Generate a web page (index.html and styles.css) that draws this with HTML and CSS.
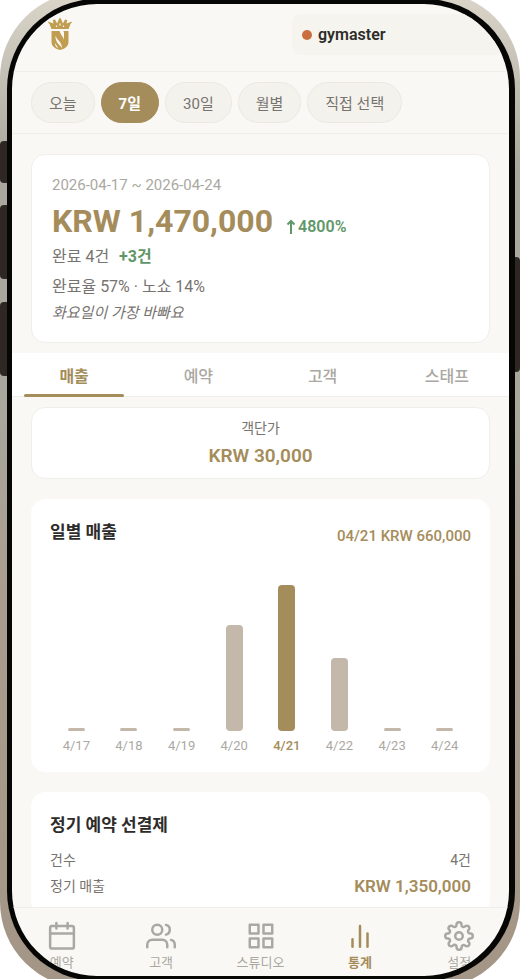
FILE: index.html
```html
<!DOCTYPE html>
<html lang="ko">
<head>
    <meta charset="UTF-8">
    <meta name="viewport" content="width=device-width, initial-scale=1.0">
    <title>통계</title>
    <link rel="stylesheet" href="styles.css">
</head>
<body>
<div class="phone">
    <!-- Side keys -->
    <span class="key key-mute"></span>
    <span class="key key-up"></span>
    <span class="key key-down"></span>
    <span class="key key-power"></span>

    <div class="bezel">
    <div class="screen">
        <header class="topbar">
            <svg class="logo" viewBox="0 0 26 34" aria-label="logo">
                <path fill="#c09d50" d="M4.500 12 2.500 7 .5 4.500l2.500.8 3.500 1.200L5.800 3 8 2.500l2 4L12 2l1-1.500L14 2l2 4.500 2-4 2.200.5-.7 3.500L23 5.300l2.500-.8-2 2.500-2 5z"/>
                <path fill="none" d="M9.500 8.500v1.500M16.500 8.500v1.500M13 6.500v2" stroke="#faf8f4" stroke-width="1.200"/>
                <path fill="#c09d50" d="M4.500 14h17v11c0 4.500-4 7-8.500 8-4.500-1-8.500-3.500-8.500-8z"/>
                <path fill="#faf8f4" d="M12.500 13.500c3.500 0 4.500.5 4.500 2.500v7c-.5-3.500-3.500-4.500-4.500-9.500z"/>
                <path fill="#faf8f4" d="M8.500 18.500c1 4.500 6.500 6 6.500 13-1.500-4-7-5-6.500-13z"/>
                <path fill="#faf8f4" d="M8 26c.8 2 2.500 3 3 5.500C9 30 8 28.500 8 26z"/>
            </svg>
            <button class="store"><span class="dot"></span>gymaster</button>
        </header>

        <div class="chips">
            <button class="chip">오늘</button>
            <button class="chip active">7일</button>
            <button class="chip">30일</button>
            <button class="chip">월별</button>
            <button class="chip">직접 선택</button>
        </div>

        <main class="content">
            <section class="card summary">
                <p class="period">2026-04-17 ~ 2026-04-24</p>
                <div class="total">
                    <strong>KRW 1,470,000</strong>
                    <span class="up">
                        <svg viewBox="0 0 10 16"><path d="M5 15V2M1.500 5.500 5 2l3.500 3.500"/></svg>4800%
                    </span>
                </div>
                <p class="done">완료 4건 <b>+3건</b></p>
                <p class="rate">완료율 57% · 노쇼 14%</p>
                <p class="note">화요일이 가장 바빠요</p>
            </section>

            <div class="tabs" role="tablist">
                <button class="tab active" role="tab" aria-selected="true">매출</button>
                <button class="tab" role="tab">예약</button>
                <button class="tab" role="tab">고객</button>
                <button class="tab" role="tab">스태프</button>
            </div>

            <section class="card average">
                <p>객단가</p>
                <strong>KRW 30,000</strong>
            </section>

            <section class="card plain daily">
                <div class="daily-head">
                    <h2>일별 매출</h2>
                    <span class="peak">04/21 KRW 660,000</span>
                </div>
                <div class="chart">
                    <div class="col"><i style="height:3px"></i><span>4/17</span></div>
                    <div class="col"><i style="height:3px"></i><span>4/18</span></div>
                    <div class="col"><i style="height:3px"></i><span>4/19</span></div>
                    <div class="col"><i style="height:106px"></i><span>4/20</span></div>
                    <div class="col top"><i style="height:146px"></i><span>4/21</span></div>
                    <div class="col"><i style="height:73px"></i><span>4/22</span></div>
                    <div class="col"><i style="height:3px"></i><span>4/23</span></div>
                    <div class="col"><i style="height:3px"></i><span>4/24</span></div>
                </div>
            </section>

            <section class="card plain prepaid">
                <h2>정기 예약 선결제</h2>
                <dl>
                    <div><dt>건수</dt><dd>4건</dd></div>
                    <div><dt>정기 매출</dt><dd class="money">KRW 1,350,000</dd></div>
                </dl>
            </section>
        </main>

        <nav class="tabbar">
            <a href="#">
                <svg viewBox="0 0 24 24"><rect x="2.500" y="4" width="19" height="18" rx="1.500"/><path d="M2.500 10h19M7.500 1.500V6M16.500 1.500V6"/></svg>
                예약
            </a>
            <a href="#">
                <svg viewBox="0 0 24 24"><circle cx="9" cy="7" r="4"/><path d="M1 21v-2a4 4 0 0 1 4-4h8a4 4 0 0 1 4 4v2M23 21v-2a4 4 0 0 0-3-3.870M16 3.130a4 4 0 0 1 0 7.750"/></svg>
                고객
            </a>
            <a href="#">
                <svg viewBox="0 0 24 24"><rect x="3" y="3" width="7" height="7"/><rect x="14" y="3" width="7" height="7"/><rect x="3" y="14" width="7" height="7"/><rect x="14" y="14" width="7" height="7"/></svg>
                스튜디오
            </a>
            <a href="#" class="active">
                <svg viewBox="0 0 24 24"><path d="M6 20.500v-6M12 20.500V4M18 20.500V10"/></svg>
                통계
            </a>
            <a href="#">
                <svg viewBox="0 0 24 24"><circle cx="12" cy="12" r="3"/><path d="M19.400 15a1.650 1.650 0 0 0 .33 1.820l.06.06a2 2 0 1 1-2.830 2.830l-.06-.06a1.650 1.650 0 0 0-2.820 1.170V21a2 2 0 0 1-4 0v-.09a1.650 1.650 0 0 0-2.900-1.260l-.06.06a2 2 0 1 1-2.830-2.830l.06-.06A1.650 1.650 0 0 0 3.090 14H3a2 2 0 0 1 0-4h.09a1.650 1.650 0 0 0 1.260-2.820l-.06-.06a2 2 0 1 1 2.830-2.830l.06.06A1.650 1.650 0 0 0 10 3.090V3a2 2 0 0 1 4 0v.09a1.650 1.650 0 0 0 2.820 1.260l.06-.06a2 2 0 1 1 2.830 2.830l-.06.06A1.650 1.650 0 0 0 20.910 10H21a2 2 0 0 1 0 4h-.09a1.650 1.650 0 0 0-1.510 1z"/></svg>
                설정
            </a>
        </nav>
    </div>
    </div>
</div>
</body>
</html>
```
FILE: styles.css
```css
:root {
    --gold: #a58c5b;
    --bg: #f9f8f4;
    --line: #efeeea;
    --text: #2e2c2a;
    --muted: #77736f;
    --soft: #aaa8a2;
    --green: #5f9768;
}
*,*::before,*::after{box-sizing:border-box;margin:0;padding:0;}
body{
    font-family:Roboto,'Noto Sans CJK KR',sans-serif;
    background:#fff;
    color:var(--text);
    height:100vh;
    overflow:hidden;
}
button{border:none;background:none;font:inherit;color:inherit;cursor:pointer;}

/* ------ Phone shell, runs a little past the window top and bottom ------ */
.phone{
    position:relative;
    height:calc(100vh + 17px);
    margin:-8px 0;
    padding:7px 5px 7px 7px;
    border-radius:86px;
    background:linear-gradient(180deg,#dcd6ca 0,#aaa89e 170px,#aaa89e 400px,#a99c8e 620px,#a49686 100%);
}
.bezel{
    height:100%;
    padding:5px 6px 5px 5px;
    border-radius:90px;
    background:#060604;
}
.screen{
    height:100%;
    display:flex;
    flex-direction:column;
    overflow:hidden;
    border-radius:85px;
    background:var(--bg);
}
.key{position:absolute;left:0;width:7px;background:#2e2723;border-radius:4px 0 0 4px;}
.key-mute{top:149px;height:42px;}
.key-up{top:213px;height:74px;}
.key-down{top:310px;height:74px;}
.key-power{top:265px;height:115px;left:auto;right:0;width:5px;border-radius:0 4px 4px 0;}

/* ------ Header ------ */
.topbar{
    display:flex;
    justify-content:space-between;
    flex-shrink:0;
    height:68px;
    padding:10px 0 0 35px;
    border-bottom:1px solid var(--line);
}
.logo{width:26px;height:34px;margin-top:3px;}
.store{
    display:flex;
    align-items:center;
    gap:6px;
    width:217px;
    height:41px;
    padding:0 10px;
    border-radius:8px 0 0 8px;
    background:#f6f4ee;
    font-size:16px;
    font-weight:600;
}
.dot{width:10px;height:10px;border-radius:50%;background:#c96f3f;}

.chips{
    display:flex;
    flex-shrink:0;
    gap:6px;
    padding:10px 19px;
    border-bottom:1px solid var(--line);
}
.chip{
    height:41px;
    padding:0 17px;
    border:1px solid #ebe8e2;
    border-radius:21px;
    background:#f4f2ed;
    color:var(--muted);
    font-size:15px;
}
.chip.active{background:var(--gold);border-color:var(--gold);color:#fff;font-weight:700;}

/* ------ Content ------ */
.content{flex:1;min-height:0;overflow:hidden;padding-top:20px;}
.card{
    margin:0 19px;
    padding:20px;
    border:1px solid var(--line);
    border-radius:14px;
    background:#fff;
}
.card.plain{border-color:#fff;padding:18px 18px 15px;margin-top:20px;}
h2{font-size:17px;line-height:28px;font-weight:700;}

.summary{padding-bottom:18px;}
.period{font-size:15px;line-height:20px;color:var(--soft);}
.total{display:flex;align-items:baseline;gap:13px;height:40px;margin-top:6px;line-height:40px;}
.total strong{font-size:32px;font-weight:700;color:var(--gold);}
.up{font-size:16px;font-weight:600;color:var(--green);}
.up svg{width:10px;height:16px;margin-right:2px;vertical-align:-3px;fill:none;stroke:currentColor;stroke-width:2;}
.done{font-size:16px;line-height:24px;margin-top:4px;color:var(--muted);}
.done b{margin-left:6px;color:var(--green);}
.rate{font-size:16px;line-height:24px;margin-top:6px;color:var(--muted);}
.note{font-size:15px;line-height:22px;margin-top:3px;color:var(--muted);font-style:italic;}

.tabs{display:flex;margin-top:10px;background:#fff;border-bottom:1px solid var(--line);}
.tab{position:relative;flex:1;height:43px;font-size:16px;font-weight:500;color:var(--soft);}
.tab.active{color:var(--gold);font-weight:700;}
.tab.active::after{
    content:'';
    position:absolute;
    left:12px;right:12px;bottom:-1px;
    height:3px;
    border-radius:2px;
    background:var(--gold);
}

.average{margin-top:10px;padding:10px 10px 8px;text-align:center;}
.average p{font-size:14px;line-height:20px;color:var(--muted);}
.average strong{display:block;margin-top:4px;font-size:19px;line-height:28px;font-weight:600;color:var(--gold);}

.daily-head{display:flex;justify-content:space-between;}
.peak{margin-top:8px;font-size:15px;line-height:20px;font-weight:500;color:var(--gold);}
.chart{display:flex;align-items:flex-end;height:210px;}
.col{flex:1;display:flex;flex-direction:column;align-items:center;gap:5px;}
.col i{width:17px;border-radius:4px;background:#c3b8aa;}
.col span{font-size:13px;line-height:20px;color:var(--soft);}
.col.top i{background:var(--gold);}
.col.top span{color:var(--gold);font-weight:500;}

.prepaid dl{margin-top:8px;}
.prepaid dl div{display:flex;justify-content:space-between;line-height:26px;font-size:14px;color:var(--muted);}
.prepaid .money{font-size:17px;font-weight:600;color:var(--gold);}

/* ------ Bottom navigation ------ */
.tabbar{
    display:flex;
    flex-shrink:0;
    height:69px;
    padding-top:13px;
    border-top:1px solid var(--line);
}
.tabbar a{
    flex:1;
    display:flex;
    flex-direction:column;
    align-items:center;
    gap:2px;
    font-size:13px;
    line-height:20px;
    color:var(--soft);
    text-decoration:none;
}
.tabbar svg{width:30px;height:30px;fill:none;stroke:currentColor;stroke-width:2;stroke-linecap:round;stroke-linejoin:round;}
.tabbar a.active{color:var(--gold);font-weight:600;}
```
